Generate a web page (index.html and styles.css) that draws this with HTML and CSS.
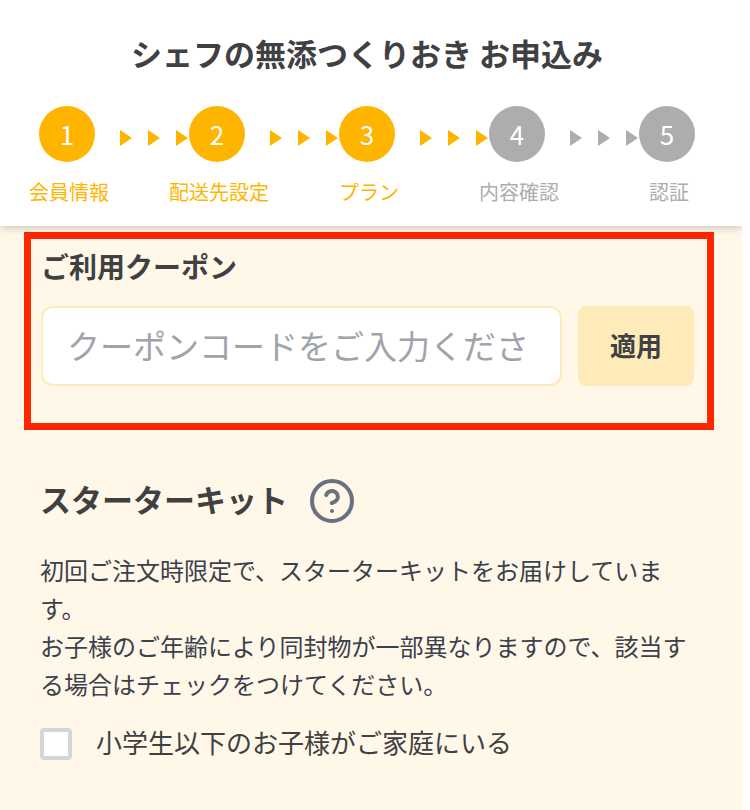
FILE: index.html
```html
<!DOCTYPE html>
<html lang="ja">
  <head>
    <meta charset="UTF-8" />
    <meta name="viewport" content="width=device-width, initial-scale=1.0" />
    <title>シェフの無添つくりおき お申込み</title>
    <link rel="stylesheet" href="styles.css">
  </head>
  <body>
    <div class="page">
      <header class="header">
        <h1 class="title">シェフの無添つくりおき お申込み</h1>
        <ol class="steps">
          <li class="step done">
            <span class="circle">1</span>
            <span class="arrows"><i></i><i></i><i></i></span>
            <span class="step-label">会員情報</span>
          </li>
          <li class="step done">
            <span class="circle">2</span>
            <span class="arrows"><i></i><i></i><i></i></span>
            <span class="step-label">配送先設定</span>
          </li>
          <li class="step done">
            <span class="circle">3</span>
            <span class="arrows"><i></i><i></i><i></i></span>
            <span class="step-label">プラン</span>
          </li>
          <li class="step">
            <span class="circle">4</span>
            <span class="arrows"><i></i><i></i><i></i></span>
            <span class="step-label">内容確認</span>
          </li>
          <li class="step">
            <span class="circle">5</span>
            <span class="step-label">認証</span>
          </li>
        </ol>
      </header>

      <main>
        <!-- クーポン -->
        <form class="coupon">
          <label class="coupon-title" for="coupon">ご利用クーポン</label>
          <div class="coupon-row">
            <input id="coupon" class="coupon-input" type="text" placeholder="クーポンコードをご入力ください" />
            <button class="apply" type="button">適用</button>
          </div>
        </form>

        <!-- スターターキット -->
        <section class="kit">
          <div class="kit-head">
            <h2 class="kit-title">スターターキット</h2>
            <button class="help" type="button" aria-label="ヘルプ">
              <svg viewBox="0 0 24 24" fill="none" stroke="currentColor" stroke-width="2" stroke-linecap="round" stroke-linejoin="round">
                <circle cx="12" cy="12" r="10" />
                <path d="M9.09 9a3 3 0 0 1 5.83 1c0 2-3 3-3 3" />
                <path d="M12 17h.01" />
              </svg>
            </button>
          </div>
          <p class="kit-text">
            初回ご注文時限定で、スターターキットをお届けしています。<br />お子様のご年齢により同封物が一部異なりますので、該当する場合はチェックをつけてください。
          </p>
          <label class="check">
            <input type="checkbox" />
            <span>小学生以下のお子様がご家庭にいる</span>
          </label>
        </section>
      </main>
    </div>
  </body>
</html>
```
FILE: styles.css
```css
* {
  box-sizing: border-box;
}

body {
  margin: 0;
  padding-right: 8px;
  background: #fdfdfd;
  color: #404042;
  font-family: "Noto Sans CJK JP", sans-serif;
}

.page {
  min-height: 100vh;
  background: #fff8e9;
}

/* ヘッダー */
.header {
  padding: 33px 0 22px;
  background: #fff;
  box-shadow: 0 2px 8px rgba(0, 0, 0, 0.2);
  clip-path: inset(0 0 -16px 0);
}

.title {
  margin: 0 8px 33px 0;
  font-size: 31px;
  line-height: 40px;
  text-align: center;
}

.steps {
  display: flex;
  margin: 0;
  padding: 0 47px 0 39px;
  list-style: none;
}

.step {
  flex: 1;
  display: grid;
  grid-template-columns: 56px 1fr;
  row-gap: 18px;
  color: #adadad;
}

.step:last-child {
  flex: none;
  grid-template-columns: 56px;
}

.step .circle {
  display: flex;
  align-items: center;
  justify-content: center;
  height: 56px;
  padding-bottom: 2px;
  border-radius: 50%;
  background: #adadad;
  color: #fff;
  font-size: 26px;
}

.done {
  color: #ffb400;
}

.done .circle {
  background: #ffb400;
}

.arrows {
  display: flex;
  align-items: center;
  justify-content: space-between;
  padding: 8px 1px 0 25px;
}

.arrows i {
  border-left: 12px solid;
  border-top: 8px solid transparent;
  border-bottom: 8px solid transparent;
}

.step-label {
  grid-column: 1;
  justify-self: center;
  padding-left: 4px;
  font-size: 20px;
  line-height: 24px;
  white-space: nowrap;
}

/* クーポン */
main {
  padding: 6px 28px 24px 24px;
}

.coupon {
  padding: 7px 13px 37px 10px;
  border: 7px solid #ff2600;
}

.coupon-title {
  display: block;
  margin-bottom: 20px;
  font-size: 28px;
  font-weight: bold;
  line-height: 40px;
}

.coupon-row {
  display: flex;
  gap: 16px;
}

.coupon-input {
  flex: 1;
  min-width: 0;
  height: 80px;
  padding: 0 30px 2px 24px;
  border: 2px solid #ffeaba;
  border-radius: 12px;
  background: #fff;
  color: inherit;
  font-family: inherit;
  font-size: 33px;
}

.coupon-input::placeholder {
  color: #a0a3a9;
}

.apply {
  width: 116px;
  padding: 0 0 4px;
  border: 0;
  border-radius: 8px;
  background: #ffeaba;
  color: inherit;
  font-family: inherit;
  font-size: 26px;
  font-weight: bold;
}

/* スターターキット */
.kit {
  padding: 47px 20px 0 16px;
}

.kit-head {
  display: flex;
  align-items: center;
  gap: 20px;
  margin-bottom: 26px;
}

.kit-title {
  margin: 0;
  padding-bottom: 4px;
  font-size: 31px;
  line-height: 44px;
}

.help {
  height: 48px;
  padding: 0;
  border: 0;
  background: none;
  color: #6b7080;
}

.help svg {
  display: block;
  width: 48px;
  height: 48px;
}

.kit-text {
  margin: 0 0 25px;
  color: #3c404c;
  font-size: 24px;
  line-height: 38px;
}

.check {
  display: flex;
  align-items: center;
  gap: 24px;
  font-size: 26px;
  line-height: 32px;
}

.check span {
  padding-bottom: 2px;
  margin-top: -2px;
}

.check input {
  appearance: none;
  width: 32px;
  height: 32px;
  margin: 0;
  border: 4px solid #d3d5dc;
  border-radius: 4px;
  background: #fff;
}

.check input:checked {
  background: #ffb400;
}
```
